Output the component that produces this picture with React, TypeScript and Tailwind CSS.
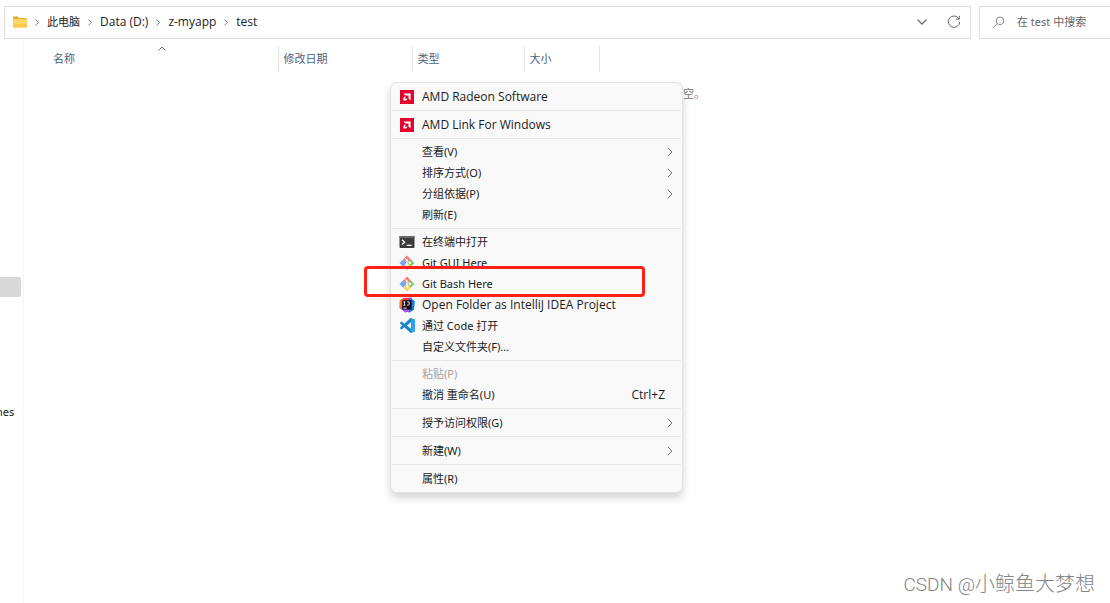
import React from "react";
import clsx from "clsx";

type MenuEntry = {
  label: string;
  icon?: React.ReactNode;
  shortcut?: string;
  submenu?: boolean;
  disabled?: boolean;
  large?: boolean;
};

const FolderIcon = () => (
  <svg viewBox="0 0 14 12" className="h-3 w-3.5 flex-none" aria-hidden="true">
    <path d="M0 1.2Q0 .4.8.4h3.8l1.4 1.5h7.2q.8 0 .8.8V6H0z" fill="#e8a522" />
    <rect x="0" y="2.8" width="14" height="8.6" rx=".7" fill="#fdd568" />
    <path d="M0 8h14v2.7q0 .7-.7.7H.7q-.7 0-.7-.7z" fill="#fbc84d" />
  </svg>
);

const ChevronRight = ({ className }: { className?: string }) => (
  <svg
    viewBox="0 0 6 10"
    className={clsx("flex-none", className)}
    fill="none"
    stroke="currentColor"
    aria-hidden="true"
  >
    <path d="M.8.8 5 5 .8 9.2" />
  </svg>
);

const AmdIcon = () => (
  <svg viewBox="0 0 14 14" className="h-3.5 w-3.5" aria-hidden="true">
    <path fill="#e2062f" d="M0 0h14v14H0z" />
    <path fill="#fff" d="M3.4 3.4h7.2v7.2L8.5 8.5v-3h-3z" />
    <path fill="#fff" d="M5.3 6.1 3.4 8v2.6H6l1.9-1.9H5.3z" />
  </svg>
);

const TerminalIcon = () => (
  <svg viewBox="0 0 16 14" className="h-3.5 w-4" aria-hidden="true">
    <rect x=".5" y="1" width="15" height="12" rx=".8" fill="#3b3b3b" />
    <path fill="#686868" d="M.5 1h15v2H.5z" />
    <path d="m3 4.8 2.6 2.4L3 9.6M7.6 10.4h5" fill="none" stroke="#fff" strokeWidth="1.3" />
  </svg>
);

const GitIcon = () => (
  <svg viewBox="0 0 16 16" className="h-4 w-4" aria-hidden="true">
    <path fill="#f57a74" d="M8 .6 11.9 4.5 8 8 4.1 4.5z" />
    <path fill="#75a7f4" d="M4.2 4.2 7.6 8l-3.4 3.8L.5 8z" />
    <path fill="#7dcc6d" d="M11.8 4.2 15.5 8l-3.7 3.8L8.4 8z" />
    <path fill="#f8d45e" d="M8 8.2 12 11.6 8 15.4 4 11.6z" />
    <path d="M5.4 2.6 8 5.2v5.2M8 5.2 10.6 8" fill="none" stroke="#fff" strokeWidth=".9" />
    <circle cx="8" cy="5.2" r="1" fill="#fff" />
    <circle cx="8" cy="10.5" r="1.1" fill="#fff" />
    <circle cx="11" cy="8" r="1.2" fill="#fff" />
  </svg>
);

const IdeaIcon = () => (
  <svg viewBox="0 0 16 16" className="h-4 w-4" aria-hidden="true">
    <path fill="#f9762c" d="M.6 3.4 4.6.8 9 8l-4.4 5.4L.3 11z" />
    <path fill="#fe315d" d="M4.6 1 12.6.4 11 6 4 9z" />
    <path fill="#167df5" d="m11.4.4 4.4 3.8-.8 8.6-5 3L6 12z" />
    <path fill="#b74af7" d="m.8 11 5.4 4.6 4.6-1.4-5-5.2z" />
    <path fill="#130b10" d="M3.2 3.2h9.4v9.4H3.2z" />
    <path fill="none" stroke="#fff" strokeWidth=".9" d="M4.4 4.9h2M5.4 4.9v3.3M4.4 8.2h2M8.2 4.9h2v2.5q0 .8-.9.8H8M4.4 11.1h3.4" />
  </svg>
);

const CodeIcon = () => (
  <svg viewBox="0 0 24 24" className="h-[15px] w-[15px]" aria-hidden="true">
    <path
      fill="#1a86ca"
      d="M23.15 2.587L18.21.21a1.494 1.494 0 0 0-1.705.29l-9.46 8.63-4.12-3.128a.999.999 0 0 0-1.276.057L.327 7.261A1 1 0 0 0 .326 8.74L3.899 12 .326 15.26a1 1 0 0 0 .001 1.479L1.65 17.94a.999.999 0 0 0 1.276.057l4.12-3.128 9.46 8.63a1.492 1.492 0 0 0 1.704.29l4.942-2.377A1.5 1.5 0 0 0 24 20.06V3.939a1.5 1.5 0 0 0-.85-1.352zm-5.146 14.861L10.826 12l7.178-5.448v10.896z"
    />
    <path fill="#2ba5ef" d="m18 .2 5.2 2.4q.8.5.8 1.4v16q0 .9-.8 1.4L18 23.8z" />
  </svg>
);

const PATH = [
  { name: "此电脑" },
  { name: "Data (D:)", large: true },
  { name: "z-myapp", large: true },
  { name: "test", large: true },
];

const MENU: MenuEntry[][] = [
  [{ label: "AMD Radeon Software", icon: <AmdIcon />, large: true }],
  [{ label: "AMD Link For Windows", icon: <AmdIcon />, large: true }],
  [
    { label: "查看(V)", submenu: true },
    { label: "排序方式(O)", submenu: true },
    { label: "分组依据(P)", submenu: true },
    { label: "刷新(E)" },
  ],
  [
    { label: "在终端中打开", icon: <TerminalIcon /> },
    { label: "Git GUI Here", icon: <GitIcon /> },
    { label: "Git Bash Here", icon: <GitIcon /> },
    { label: "Open Folder as IntelliJ IDEA Project", icon: <IdeaIcon />, large: true },
    { label: "通过 Code 打开", icon: <CodeIcon /> },
    { label: "自定义文件夹(F)..." },
  ],
  [
    { label: "粘贴(P)", disabled: true },
    { label: "撤消 重命名(U)", shortcut: "Ctrl+Z" },
  ],
  [{ label: "授予访问权限(G)", submenu: true }],
  [{ label: "新建(W)", submenu: true }],
  [{ label: "属性(R)" }],
];

const AddressBar = () => (
  <header className="flex gap-2 pt-1.5 pl-1">
    <nav className="flex h-[33px] flex-1 items-center border border-[#dedede] pr-2 pb-px pl-2">
      <FolderIcon />
      <ol className="flex items-center">
        {PATH.map(({ name, large }) => (
          <li key={name} className="flex items-center">
            <ChevronRight className="mx-[7px] h-[7px] w-1.5 text-[#444]" />
            <button type="button" className={clsx(large && "font-['Open_Sans',sans-serif] text-[12px]")}>
              {name}
            </button>
          </li>
        ))}
      </ol>
      <div className="ml-auto flex items-center gap-4 text-[#666]">
        <button type="button" aria-label="展开" className="flex h-4 w-4 items-center justify-center">
          <svg viewBox="0 0 10 6" className="h-1.5 w-2.5" fill="none" stroke="currentColor" strokeWidth="1.3">
            <path d="m.6.6 4.4 4.4L9.4.6" />
          </svg>
        </button>
        <button type="button" aria-label="刷新" className="flex h-4 w-4 items-center justify-center">
          <svg viewBox="0 0 14 14" className="h-3.5 w-3.5" fill="none" stroke="currentColor">
            <path d="M11.8 3.6A5.7 5.7 0 1 0 12.7 7M12.3.8v3.4H8.9" />
          </svg>
        </button>
      </div>
    </nav>
    <label className="flex h-[33px] w-[131px] items-center gap-3 border border-r-0 border-[#dedede] pb-px pl-3">
      <svg viewBox="0 0 13 13" className="h-[13px] w-[13px] flex-none text-[#888]" fill="none" stroke="currentColor">
        <circle cx="8" cy="4.8" r="3.8" />
        <path d="M5.2 7.6.8 12" />
      </svg>
      <input
        type="search"
        aria-label="搜索"
        placeholder="在 test 中搜索"
        className="w-full min-w-0 outline-none placeholder:text-[#666]"
      />
    </label>
  </header>
);

const FileList = () => (
  <main className="relative min-w-0 flex-1 pt-[7px] pl-[22px]">
    <table className="table-fixed text-left text-[#4c607a]">
      <thead>
        <tr className="h-[26px]">
          <th className="relative w-[232px] border-r border-[#e5e5e5] pl-[7px] font-normal">
            名称
            <svg
              viewBox="0 0 8 5"
              className="absolute top-0 left-1/2 h-[5px] w-2 -translate-x-1/2 text-[#777]"
              fill="none"
              stroke="currentColor"
            >
              <path d="M.5 4.5 4 1l3.5 3.5" />
            </svg>
          </th>
          <th className="w-[134px] border-r border-[#e5e5e5] pl-[5px] font-normal">修改日期</th>
          <th className="w-[112px] border-r border-[#e5e5e5] pl-[5px] font-normal">类型</th>
          <th className="w-[75px] border-r border-[#e5e5e5] pl-[5px] font-normal">大小</th>
        </tr>
      </thead>
    </table>
    <p className="mt-3.5 ml-[637px] text-[#777]">空。</p>
  </main>
);

const MenuItem = ({ label, icon, shortcut, submenu, disabled, large }: MenuEntry) => (
  <button
    type="button"
    role="menuitem"
    disabled={disabled}
    className={clsx(
      "flex h-[21px] w-full items-center pr-2 pl-[7px] text-left whitespace-nowrap",
      large && "font-['Open_Sans',sans-serif] text-[12px]",
      disabled && "text-[#a3a3a3]",
    )}
  >
    <span className="mr-[7px] flex w-4 flex-none items-center justify-center">{icon}</span>
    {label}
    {shortcut && <span className="mr-2 ml-auto font-['Open_Sans',sans-serif] text-[12px]">{shortcut}</span>}
    {submenu && <ChevronRight className="ml-auto h-2.5 w-1.5 text-[#777]" />}
  </button>
);

const ContextMenu = () => (
  <div
    role="menu"
    className="absolute top-[82px] left-[390px] w-[293px] rounded-[7px] border border-[#e3e3e3] bg-[#f9f9f9] px-px py-[3px] shadow-[0_5px_9px_rgba(0,0,0,0.17)]"
  >
    {MENU.map((group, i) => (
      <div
        key={group[0].label}
        className={clsx(
          "pb-[3px] last:pb-0",
          i > 0 && "border-t border-[#e6e6e6]",
          i > 0 && (group.length > 1 ? "pt-0.5" : "pt-[3px]"),
        )}
      >
        {group.map((entry) => (
          <MenuItem key={entry.label} {...entry} />
        ))}
      </div>
    ))}
  </div>
);

export default function App() {
  return (
    <div className="relative flex min-h-screen flex-col overflow-hidden bg-white font-['Noto_Sans','Noto_Sans_CJK_SC',sans-serif] text-[11px] leading-4 text-[#1b1b1b]">
      <AddressBar />
      <div className="flex flex-1">
        <aside className="w-6 flex-none border-r border-[#f5f5f5] pt-[238px]">
          <div className="mr-0.5 h-5 rounded-r-xs bg-[#d9d9d9]" />
          <p className="mt-[107px] -ml-1">nes</p>
        </aside>
        <FileList />
      </div>
      <ContextMenu />
      <div className="absolute top-[266px] left-[364px] h-[31px] w-[281px] rounded-[4px] border-3 border-[#ff2116]" />
      <p className="absolute right-[15px] bottom-1 text-[20px] leading-7 font-light text-[#858585]">
        <span className="font-[Roboto,sans-serif] text-[19px]">CSDN @</span>
        小鲸鱼大梦想
      </p>
    </div>
  );
}
